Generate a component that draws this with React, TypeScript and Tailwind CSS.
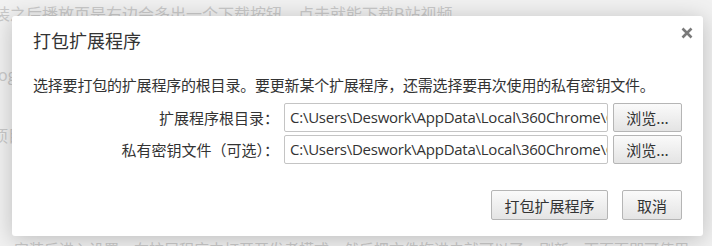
import React from 'react';

const cjk = { fontFamily: '"Microsoft YaHei", "Noto Sans CJK SC", "Noto Sans", sans-serif' };
const latin = { fontFamily: '"Segoe UI", "Open Sans", "Noto Sans CJK SC", sans-serif' };

const PATH = 'C:\\Users\\Deswork\\AppData\\Local\\360Chrome\\C';

const Row: React.FC<{ label: string }> = ({ label }) => (
  <div className="flex items-center h-[29px]">
    <div className="w-[251px] text-right text-[15px] text-[#333] pr-[5px] leading-none whitespace-nowrap">{label}</div>
    <div className="w-[324px] h-[29px] border border-[#c4c4c4] rounded-[2px] bg-white flex items-center pl-[5px]">
      <div className="w-full overflow-hidden whitespace-nowrap text-[15px] text-[#333] tracking-[-0.25px]" style={latin}>
        {PATH}
      </div>
    </div>
    <button className="ml-[5px] w-[69px] h-[29px] border border-[#b5b5b5] rounded-[2px] bg-gradient-to-b from-[#fafafa] to-[#e4e4e4] text-[15px] text-[#333] leading-none">
      浏览...
    </button>
  </div>
);

export default function App() {
  return (
    <div className="relative w-[712px] h-[246px] overflow-hidden bg-[#f1f1f1]" style={cjk}>
      {/* faded page behind the modal */}
      <div className="absolute inset-0 text-[#c9c9c9] select-none">
        <div className="absolute left-[-6px] top-[1px] text-[16px] whitespace-nowrap">
          装之后播放页是右边会多出一个下载按钮，点击就能下载B站视频
        </div>
        <div className="absolute left-[-6px] top-[63px] text-[16px]" style={latin}>log</div>
        <div className="absolute left-[-8px] top-[123px] text-[16px]">项目</div>
        <div className="absolute left-[14px] top-[238px] text-[15px] whitespace-nowrap">
          安装后进入设置，在扩展程序中打开开发者模式，然后把文件拖进去就可以了，刷新一下页面即可使用
        </div>
      </div>

      <div className="absolute left-[12px] top-[16px] w-[691px] h-[220px] bg-white rounded-[3px] shadow-[0_3px_22px_rgba(0,0,0,0.22)] px-[21px]">
        <button className="absolute right-[10px] top-[11px] w-[12px] h-[12px]">
          <svg viewBox="0 0 12 12" width="12" height="12">
            <path d="M1.5 1.5 L10.5 10.5 M10.5 1.5 L1.5 10.5" stroke="#7a7a7a" strokeWidth="2.6" />
          </svg>
        </button>

        <div className="pt-[12px] text-[18px] text-[#333] leading-[24px]">打包扩展程序</div>

        <div className="mt-[23px] text-[15px] text-[#333] leading-[20px] tracking-[-0.2px]">
          选择要打包的扩展程序的根目录。要更新某个扩展程序，还需选择要再次使用的私有密钥文件。
        </div>

        <div className="mt-[8px] flex flex-col gap-[3px]">
          <Row label="扩展程序根目录：" />
          <Row label="私有密钥文件（可选）：" />
        </div>

        <div className="mt-[26px] flex justify-end gap-[14px]">
          <button className="w-[117px] h-[30px] border border-[#b5b5b5] rounded-[2px] bg-gradient-to-b from-[#fafafa] to-[#e4e4e4] text-[15px] text-[#333] leading-none">
            打包扩展程序
          </button>
          <button className="w-[60px] h-[30px] border border-[#b5b5b5] rounded-[2px] bg-gradient-to-b from-[#fafafa] to-[#e4e4e4] text-[15px] text-[#333] leading-none">
            取消
          </button>
        </div>
      </div>
    </div>
  );
}
